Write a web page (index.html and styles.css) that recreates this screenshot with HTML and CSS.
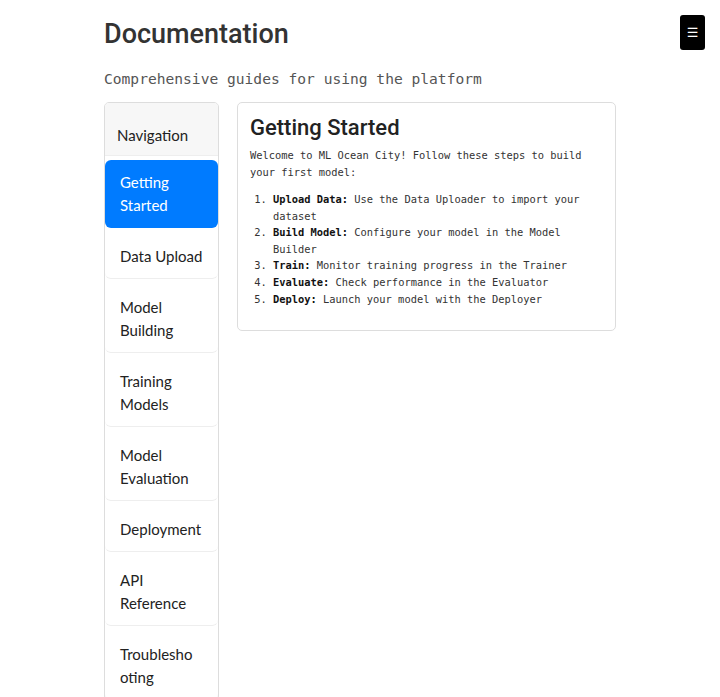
FILE: index.html
```html
<!DOCTYPE html>
<html lang="en">
<head>
<meta charset="utf-8">
<title>Documentation</title>
<link rel="stylesheet" href="styles.css">
</head>
<body>
<button class="menu-btn" type="button" aria-label="Menu">☰</button>
<main class="container">
  <h1 class="page-title">Documentation</h1>
  <p class="page-sub">Comprehensive guides for using the platform</p>
  <div class="layout">
    <nav class="nav-card">
      <div class="nav-header">Navigation</div>
      <a class="nav-item active" href="#">Getting Started</a>
      <a class="nav-item" href="#">Data Upload</a>
      <a class="nav-item" href="#">Model Building</a>
      <a class="nav-item" href="#">Training Models</a>
      <a class="nav-item" href="#">Model Evaluation</a>
      <a class="nav-item" href="#">Deployment</a>
      <a class="nav-item" href="#">API Reference</a>
      <a class="nav-item" href="#">Troublesho<wbr>oting</a>
    </nav>
    <section class="content-card">
      <h2 class="content-title">Getting Started</h2>
      <p class="content-text">Welcome to ML Ocean City! Follow these steps to build your first model:</p>
      <ol class="steps">
        <li><strong>Upload Data:</strong> Use the Data Uploader to import your dataset</li>
        <li><strong>Build Model:</strong> Configure your model in the Model Builder</li>
        <li><strong>Train:</strong> Monitor training progress in the Trainer</li>
        <li><strong>Evaluate:</strong> Check performance in the Evaluator</li>
        <li><strong>Deploy:</strong> Launch your model with the Deployer</li>
      </ol>
    </section>
  </div>
</main>
</body>
</html>
```
FILE: styles.css
```css
* { box-sizing: border-box; }
body {
  margin: 0;
  background: #fff;
  font-family: Lato, "Noto Sans", sans-serif;
  color: #212529;
}
.menu-btn {
  position: absolute;
  top: 15px;
  left: 680px;
  width: 25px;
  height: 35px;
  border: 0;
  border-radius: 3px;
  background: #000;
  color: #fff;
  font-size: 13px;
  padding: 0;
  line-height: 35px;
  font-family: "DejaVu Sans", sans-serif;
}
.container {
  width: 512px;
  margin-left: 104px;
  padding-top: 16px;
}
.page-title {
  margin: 0;
  font-family: Roboto, sans-serif;
  font-weight: 500;
  font-size: 27px;
  line-height: 36px;
  color: #333;
}
.page-sub {
  margin: 17px 0 13px;
  font-family: "DejaVu Sans Mono", monospace;
  font-size: 14.6px;
  line-height: 20px;
  color: #555;
}
.layout {
  display: flex;
  align-items: flex-start;
  gap: 18px;
}
.nav-card {
  width: 115px;
  flex: none;
  border: 1px solid #ddd;
  border-radius: 5px;
  display: flex;
  flex-direction: column;
  overflow: hidden;
}
.nav-header {
  background: #f7f7f7;
  padding: 21px 12px 9px;
  font-size: 15px;
  line-height: 22px;
  color: #222;
  border-bottom: 1px solid #eee;
}
.nav-item {
  display: block;
  padding: 17px 10px 10px 15px;
  font-size: 15px;
  line-height: 23px;
  color: #222;
  text-decoration: none;
  overflow-wrap: anywhere;
  border-bottom: 1px solid #eee;
  border-radius: 0 0 6px 6px;
}
.nav-item.active {
  margin-top: 4px;
  padding: 11px 10px 11px 15px;
  background: #007bff;
  color: #fff;
  border-radius: 6px;
  border-bottom: 0;
}
.content-card {
  flex: 1;
  border: 1px solid #ddd;
  border-radius: 5px;
  padding: 12px 12px 23px;
}
.content-title {
  margin: 0 0 6px;
  font-family: Roboto, sans-serif;
  font-weight: 500;
  font-size: 22px;
  line-height: 26px;
  color: #222;
}
.content-text {
  margin: 0 0 10px;
  font-family: "DejaVu Sans Mono", monospace;
  font-size: 10.4px;
  line-height: 17px;
  color: #333;
}
.steps {
  margin: 0;
  padding-left: 23px;
  font-family: "DejaVu Sans Mono", monospace;
  font-size: 10.4px;
  line-height: 16.6px;
  color: #333;
}
.steps strong { color: #111; }
```
